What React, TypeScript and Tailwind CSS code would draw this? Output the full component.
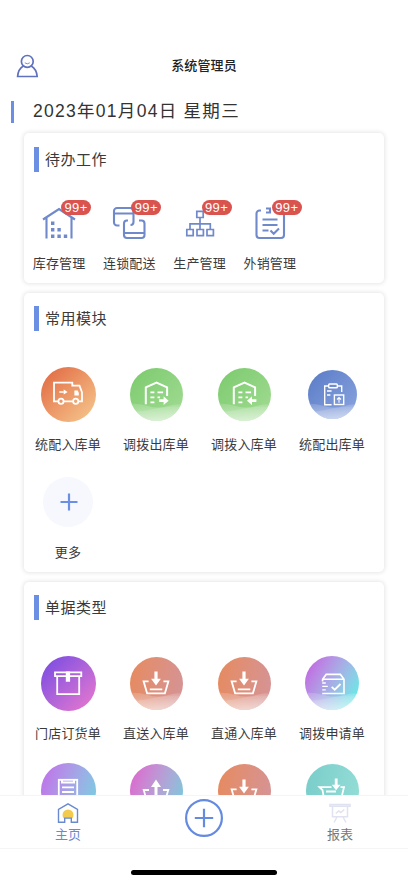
import type { ReactNode } from "react";

type Item = {
	id: string;
	label?: string;
	icon: ReactNode;
	circle: string;
	wave?: boolean;
};

function InArrow() {
	return (
		<path
			d="M26.4 16.5h3.2v7.3h3.3L28 30.4l-4.9-6.6h3.3z"
			fill="currentColor"
			stroke="none"
		/>
	);
}

function TruckIcon() {
	return (
		<>
			<path d="M18.2 35.3H14V16.7h18.3v3h7.2l2.5 6.6v9h-3.4M23.8 35.3h9" />
			<circle cx="21" cy="35.3" r="2.6" />
			<circle cx="35.7" cy="35.3" r="2.6" />
			<path d="M19.3 26h4.5" strokeWidth="1.3" />
			<path d="M23.7 23.6 27.6 26l-3.9 2.4z" fill="currentColor" stroke="none" />
			<path d="M34.4 24.6h3.3l1.1 2.5v2.3h-4.4z" fill="currentColor" stroke="none" />
		</>
	);
}

function WarehouseIcon({ out }: { out?: boolean }) {
	return (
		<>
			<path d="M17.8 38.3V21.4l10.7-4.9 10.6 4.9V30" strokeWidth="2" />
			<path d="M22.4 26.3h4M22.4 31.3h4M22.4 36.3h4M29.5 26.3h5.6M29.5 31.3h2.6" />
			{out ? (
				<path
					d="M31.2 33.3h4.4v-3l5 4.4-5 4.4v-3h-4.4z"
					fill="currentColor"
					stroke="none"
				/>
			) : (
				<path
					d="M40.4 33.3H36v-3l-5 4.4 5 4.4v-3h4.4z"
					fill="currentColor"
					stroke="none"
				/>
			)}
		</>
	);
}

function ClipboardIcon() {
	return (
		<>
			<path d="M27.6 38.7h-6.9V20h4M33.3 20h4.4v6" strokeWidth="1.4" />
			<rect x="24.7" y="18" width="8.6" height="3.8" rx="0.8" strokeWidth="1.4" />
			<path d="M23 25h4.6M23 29h3.4" strokeWidth="1.3" />
			<rect x="30.4" y="29" width="9.3" height="9.5" strokeWidth="1.4" />
			<path d="M35 36.8v-5M33 33.5l2-2 2 2" strokeWidth="1.1" />
		</>
	);
}

function BoxIcon() {
	return (
		<>
			<path d="M15 17.3h26.3v3.9H15zM17.2 21.2h22v18h-22z" />
			<path d="M25.8 16.6h4.3v10.1h-4.3z" fill="currentColor" stroke="none" />
		</>
	);
}

function BasketInIcon() {
	return (
		<>
			<path d="M20.6 26.3h-5l3.5 12h17.8l3.5-12h-5" />
			<path d="M21.8 34.3h12.5" />
			<InArrow />
		</>
	);
}

function BasketOutIcon() {
	return (
		<>
			<path d="M21 27h-5.3l3.5 11.6h17.6L40.3 27H35" />
			<path
				d="M28 16.6l-5 7.4h3.5v11h3V24H33z"
				fill="currentColor"
				stroke="none"
			/>
		</>
	);
}

function ApplyIcon() {
	return (
		<>
			<path
				d="M18.6 26.6v-2.4l3.6-4.8h14.2l3.6 4.8v14.3H18.2M18.6 24.2H40"
				strokeWidth="1.6"
			/>
			<path d="M18.2 28h3.6M18.2 31.3h5.6M18.2 34.8h3.6" strokeWidth="1.3" />
			<path d="m27.7 31.8 3 2.9 5.8-5.7" />
		</>
	);
}

function DocumentIcon() {
	return (
		<>
			<rect x="18.8" y="16.8" width="18.4" height="23" />
			<path d="M22 17v2.6h12V17" strokeWidth="2" />
			<path d="M22 24.3h12M22 29h12M22 33.6h12" />
		</>
	);
}

function BowlInIcon() {
	return (
		<>
			<path d="M27.5 24.2h-12l3 2.8 2 11.5h16L40 24.2h-3.5" />
			<path d="M22 28.5h10" />
			<path
				d="M30.8 15.5h2.8v6.3h2.9l-4.4 5.4-4.3-5.4h3z"
				fill="currentColor"
				stroke="none"
			/>
		</>
	);
}

const modules: Item[] = [
	{
		id: "allot-in",
		label: "统配入库单",
		icon: <TruckIcon />,
		circle: "size-[55px] bg-linear-135 from-[#e3744b] from-15% to-[#f5ca90]",
	},
	{
		id: "transfer-out",
		label: "调拨出库单",
		icon: <WarehouseIcon out />,
		circle: "size-[53px] bg-linear-135 from-[#7bca6d] to-[#a3dc94]",
		wave: true,
	},
	{
		id: "transfer-in",
		label: "调拨入库单",
		icon: <WarehouseIcon />,
		circle: "size-[53px] bg-linear-135 from-[#7bca6d] to-[#a3dc94]",
		wave: true,
	},
	{
		id: "allot-out",
		label: "统配出库单",
		icon: <ClipboardIcon />,
		circle: "size-[49px] bg-linear-135 from-[#597bc6] to-[#8ca5df]",
		wave: true,
	},
];

const bills: Item[] = [
	{
		id: "order",
		label: "门店订货单",
		icon: <BoxIcon />,
		circle: "size-[55px] bg-linear-135 from-[#8650e0] from-15% to-[#ee77cc]",
	},
	{
		id: "direct-in",
		label: "直送入库单",
		icon: <BasketInIcon />,
		circle: "size-[53px] bg-linear-100 from-[#e78a5d] to-[#d49497]",
		wave: true,
	},
	{
		id: "through-in",
		label: "直通入库单",
		icon: <BasketInIcon />,
		circle: "size-[53px] bg-linear-100 from-[#e78a5d] to-[#d49497]",
		wave: true,
	},
	{
		id: "transfer-apply",
		label: "调拨申请单",
		icon: <ApplyIcon />,
		circle: "size-[54px] bg-linear-120 from-[#c169e2] from-10% to-[#6de3e6] to-85%",
		wave: true,
	},
	{
		id: "document",
		icon: <DocumentIcon />,
		circle: "size-[55px] bg-linear-110 from-[#bb7ce9] from-15% to-[#69d4e0]",
	},
	{
		id: "basket-out",
		icon: <BasketOutIcon />,
		circle: "size-[53px] bg-linear-110 from-[#d673d0] from-15% to-[#64cfdc]",
	},
	{
		id: "basket-in",
		icon: <BasketInIcon />,
		circle: "size-[53px] bg-linear-100 from-[#e78a5d] to-[#d49497]",
		wave: true,
	},
	{
		id: "bowl-in",
		icon: <BowlInIcon />,
		circle: "size-[53px] bg-linear-100 from-[#79cdca] to-[#95ddd7]",
		wave: true,
	},
];

const works = [
	{
		label: "库存管理",
		icon: (
			<>
				<path d="M4 13.5 20 3l16 10.5M7.5 12v20.5M32.5 12v20.5" />
				<path
					d="M12 15.5h3.4v3.4H12zM12 22h3.4v3.4H12zM18.4 22h3.4v3.4h-3.4zM12 28.6h3.4V32H12zM18.4 28.6h3.4V32h-3.4zM24.8 28.6h3.4V32h-3.4z"
					fill="currentColor"
					stroke="none"
				/>
			</>
		),
	},
	{
		label: "连锁配送",
		icon: (
			<>
				<path d="M10.5 19.5H8a3 3 0 0 1-3-3V5a3 3 0 0 1 3-3h13.5a3 3 0 0 1 3 3v11a3 3 0 0 1-3 3M5 7.5h19" />
				<path d="M19 14.5h-1a3 3 0 0 0-3 3V29a3 3 0 0 0 3 3h14.5a3 3 0 0 0 3-3V17.5a3 3 0 0 0-3-3H30M15 27h20.5" />
			</>
		),
	},
	{
		label: "生产管理",
		icon: (
			<g strokeWidth="1.7">
				<path d="M16.8 5.3h6.4v6.2h-6.4zM6.8 23.5h6.4v6.2H6.8zM17 23.5h6.4v6.2H17zM27 23.5h6.4v6.2H27zM20 11.5v12M10 23.5v-5.7h20.3v5.7" />
			</g>
		),
	},
	{
		label: "外销管理",
		icon: (
			<>
				<path d="M11 4.5H9.5a3 3 0 0 0-3 3V29a3 3 0 0 0 3 3H31a3 3 0 0 0 3-3V7.5a3 3 0 0 0-3-3M16 2.5h4v4h-4M12.5 13.5h15M12.5 19h15M12.5 24.5h6" />
				<path d="m20.5 24.5 3.2 3.2 5.3-5.2" />
			</>
		),
	},
];

function SectionTitle({ children }: { children: ReactNode }) {
	return (
		<div className="flex h-[25px] items-center pl-2.5">
			<div className="h-full w-[5px] bg-[#6a8fe3]" />
			<h2 className="ml-1.5 pt-0.5 text-[15px] tracking-[0.5px] text-[#3a3a3a]">
				{children}
			</h2>
		</div>
	);
}

function Card({ className, children }: { className: string; children: ReactNode }) {
	return (
		<section
			className={`shrink-0 rounded-[5px] bg-white shadow-[0_0_4px_1px_rgba(0,0,0,0.1)] ${className}`}
		>
			{children}
		</section>
	);
}

function ItemLabel({ children }: { children: ReactNode }) {
	return (
		<span className="mt-[13px] h-5 text-[13px] leading-5 tracking-[0.2px] whitespace-nowrap text-[#3b3b3b]">
			{children}
		</span>
	);
}

// Shared fill for the pale wave at the bottom of the round icons
function WaveGradient() {
	return (
		<svg className="absolute size-0">
			<defs>
				<linearGradient id="wave" x1="0" y1="0" x2="0" y2="1">
					<stop offset="0" stopColor="white" stopOpacity="0.15" />
					<stop offset="1" stopColor="white" stopOpacity="0.5" />
				</linearGradient>
			</defs>
		</svg>
	);
}

function GridItem({ item }: { item: Item }) {
	return (
		<div className="flex h-[107.5px] flex-col items-center">
			<div className="flex size-14 items-center justify-center">
				<div
					className={`flex shrink-0 items-center justify-center overflow-hidden rounded-full text-white ${item.circle}`}
				>
					<svg
						viewBox="0 0 56 56"
						className="size-14 shrink-0"
						fill="none"
						stroke="currentColor"
						strokeWidth="1.8"
					>
						{item.wave && (
							<g fill="url(#wave)" stroke="none">
								<path d="M0 38q10-1 20 2t20 0 16-1V56H0z" />
								<path d="M0 46q14 0 26-3t30-2v15H0z" opacity="0.6" />
							</g>
						)}
						{item.icon}
					</svg>
				</div>
			</div>
			{item.label && <ItemLabel>{item.label}</ItemLabel>}
		</div>
	);
}

export default function App() {
	return (
		<div className="flex h-[883px] w-[408px] flex-col overflow-hidden bg-white font-['Liberation_Sans','Noto_Sans_CJK_SC',sans-serif]">
			<WaveGradient />
			<header className="grid h-[90px] shrink-0 grid-cols-[1fr_auto_1fr] items-end pb-3">
				<svg
					viewBox="0 0 24 24"
					className="ml-[15px] size-6 text-[#6072bd]"
					fill="none"
					stroke="currentColor"
					strokeWidth="1.7"
				>
					<circle cx="12.3" cy="7.4" r="5.9" />
					<path d="M8.3 12C5 14 3 17 2.6 22.5h19.6C21.7 17 19.6 14 16.3 12" />
					<path d="M9.8 8.8q2.5 2 5 0" strokeWidth="0.8" />
				</svg>
				<h1 className="pb-0.5 text-[13px] leading-5 font-medium tracking-[0.1px] text-[#222]">
					系统管理员
				</h1>
			</header>

			<div className="flex h-[43px] shrink-0 items-center pl-[11px]">
				<div className="h-[22px] w-[3px] bg-[#6a8fe3]" />
				<p className="ml-[19px] text-[17.5px] tracking-[1.28px] text-[#333]">
					2023年01月04日 星期三
				</p>
			</div>

			<main className="-mt-2 flex min-h-0 flex-1 flex-col gap-2.5 overflow-hidden px-6 pt-2">
				<Card className="h-[150px] pt-3.5">
					<SectionTitle>待办工作</SectionTitle>
					<div className="mt-[34px] grid w-[281px] grid-cols-4">
						{works.map((work) => (
							<div key={work.label} className="flex flex-col items-center">
								<div className="relative h-[36px] w-10">
									<svg
										viewBox="0 0 40 36"
										className="h-9 w-10 text-[#7089cb]"
										fill="none"
										stroke="currentColor"
										strokeWidth="2.1"
									>
										{work.icon}
									</svg>
									<span className="absolute -top-[6px] left-[22px] h-[15px] w-[30px] rounded-full bg-[#d9534f] text-center text-[13px] leading-[15px] tracking-[0.4px] text-white">
										99+
									</span>
								</div>
								<span className="mt-3 text-[13px] leading-5 tracking-[0.2px] text-[#3b3b3b]">
									{work.label}
								</span>
							</div>
						))}
					</div>
				</Card>

				<Card className="h-[279px] pt-[13px]">
					<SectionTitle>常用模块</SectionTitle>
					<div className="mt-[35px] grid w-[352px] grid-cols-4">
						{modules.map((item) => (
							<GridItem key={item.id} item={item} />
						))}
						<div className="flex flex-col items-center">
							<div className="flex size-14 items-center justify-center">
								<div className="flex size-[50px] items-center justify-center rounded-full bg-[#f6f8fe]">
									<svg
										viewBox="0 0 18 18"
										className="ml-0.5 size-[18px] text-[#6a8fe3]"
										stroke="currentColor"
										strokeWidth="2.2"
									>
										<path d="M9 .5v17M.5 9h17" />
									</svg>
								</div>
							</div>
							<ItemLabel>更多</ItemLabel>
						</div>
					</div>
				</Card>

				<Card className="h-[279px] pt-[13px]">
					<SectionTitle>单据类型</SectionTitle>
					<div className="mt-[35px] grid w-[352px] grid-cols-4">
						{bills.map((item) => (
							<GridItem key={item.id} item={item} />
						))}
					</div>
				</Card>
			</main>

			<nav className="grid h-[54px] shrink-0 grid-cols-3 border-y border-[#f5f5f5] bg-white">
				<div className="flex flex-col items-center pt-1.5 text-[#6a8ad0]">
					<svg viewBox="0 0 22 22" className="size-[22px]" fill="none">
						<circle cx="11" cy="13" r="5.5" fill="#f2cb4d" />
						<path d="M7.7 16.1h6.6v4.2H7.7z" fill="white" />
						<path
							d="M1.5 20.3V7.5L11 1.8l9.5 5.7v12.8h-6.2v-4.2H7.7v4.2z"
							stroke="currentColor"
							strokeWidth="1.4"
						/>
					</svg>
					<span className="text-[13px] leading-[22px]">主页</span>
				</div>
				<div className="flex justify-center pt-[3px]">
					<svg
						viewBox="0 0 38 38"
						className="size-[38px] text-[#658be0]"
						fill="none"
						stroke="currentColor"
						strokeWidth="2.2"
					>
						<circle cx="19" cy="19" r="17.9" />
						<path d="M19 9.8v18.4M9.8 19h18.4" />
					</svg>
				</div>
				<div className="flex flex-col items-center pt-1.5 text-[#777]">
					<svg
						viewBox="0 0 22 22"
						className="size-[22px] text-[#e1e2f1]"
						fill="none"
						stroke="currentColor"
						strokeWidth="1.5"
					>
						<path d="M1 2.5h20v1.8H1zM3.5 4.5v10.3h15V4.5M8 15l-3 5.5M14 15l3 5.5" />
						<path d="m6.8 11.5 3-2.5 2 1.5 3.5-3" />
					</svg>
					<span className="text-[13px] leading-[22px]">报表</span>
				</div>
			</nav>
			<div className="flex h-[34px] shrink-0 justify-center pt-[21px]">
				<div className="h-[5px] w-[146px] rounded-full bg-black" />
			</div>
		</div>
	);
}
